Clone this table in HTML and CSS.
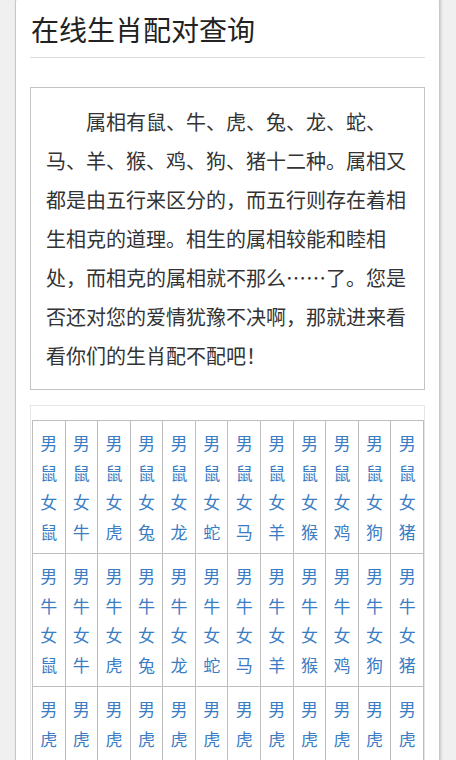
FILE: index.html
```html
<!DOCTYPE html>
<html lang="zh-CN">
<head>
<meta charset="utf-8">
<title>在线生肖配对查询</title>
<link rel="stylesheet" href="styles.css">
</head>
<body>
<div class="card">
  <h1 class="title">在线生肖配对查询</h1>
  <div class="intro">属相有鼠、牛、虎、兔、龙、蛇、马、羊、猴、鸡、狗、猪十二种。属相又都是由五行来区分的，而五行则存在着相生相克的道理。相生的属相较能和睦相处，而相克的属相就不那么……了。您是否还对您的爱情犹豫不决啊，那就进来看看你们的生肖配不配吧！</div>
  <div class="grid-wrap">
    <table class="grid">
      <tr>
        <td><a>男鼠女鼠</a></td><td><a>男鼠女牛</a></td><td><a>男鼠女虎</a></td><td><a>男鼠女兔</a></td><td><a>男鼠女龙</a></td><td><a>男鼠女蛇</a></td><td><a>男鼠女马</a></td><td><a>男鼠女羊</a></td><td><a>男鼠女猴</a></td><td><a>男鼠女鸡</a></td><td><a>男鼠女狗</a></td><td><a>男鼠女猪</a></td>
      </tr>
      <tr>
        <td><a>男牛女鼠</a></td><td><a>男牛女牛</a></td><td><a>男牛女虎</a></td><td><a>男牛女兔</a></td><td><a>男牛女龙</a></td><td><a>男牛女蛇</a></td><td><a>男牛女马</a></td><td><a>男牛女羊</a></td><td><a>男牛女猴</a></td><td><a>男牛女鸡</a></td><td><a>男牛女狗</a></td><td><a>男牛女猪</a></td>
      </tr>
      <tr>
        <td><a>男虎女鼠</a></td><td><a>男虎女牛</a></td><td><a>男虎女虎</a></td><td><a>男虎女兔</a></td><td><a>男虎女龙</a></td><td><a>男虎女蛇</a></td><td><a>男虎女马</a></td><td><a>男虎女羊</a></td><td><a>男虎女猴</a></td><td><a>男虎女鸡</a></td><td><a>男虎女狗</a></td><td><a>男虎女猪</a></td>
      </tr>
    </table>
  </div>
</div>
</body>
</html>
```
FILE: styles.css
```css
html, body {
  margin: 0;
  padding: 0;
  background: #f0f0f0;
}
body {
  font-family: "Noto Sans CJK SC", "Noto Sans", sans-serif;
  color: #333;
}
.card {
  margin: -6px 16px 0 15px;
  background: #fff;
  border: 1px solid #c8c8c8;
  border-radius: 8px;
  box-shadow: 1px 0 3px rgba(0, 0, 0, 0.18);
  padding: 14px 14px 20px 14px;
}
.title {
  margin: 0;
  font-size: 28px;
  font-weight: normal;
  line-height: 40px;
  color: #222;
  padding: 0 0 8px 1px;
  border-bottom: 1px solid #dcdcdc;
}
.intro {
  margin-top: 29px;
  border: 1px solid #c4c4c4;
  padding: 14px 15px;
  font-size: 20px;
  line-height: 39px;
  text-indent: 2em;
  color: #333;
}
.grid-wrap {
  margin-top: 15px;
  border: 1px solid #e6e6e6;
  padding: 14px 0 0 1px;
}
.grid {
  width: 100%;
  table-layout: fixed;
  border-collapse: collapse;
}
.grid td {
  border: 1px solid #bdbdbd;
  padding: 7px 4px;
  text-align: center;
  vertical-align: top;
  font-size: 17px;
  line-height: 29.5px;
}
.grid a {
  color: #3b7dc4;
  text-decoration: none;
}
```
